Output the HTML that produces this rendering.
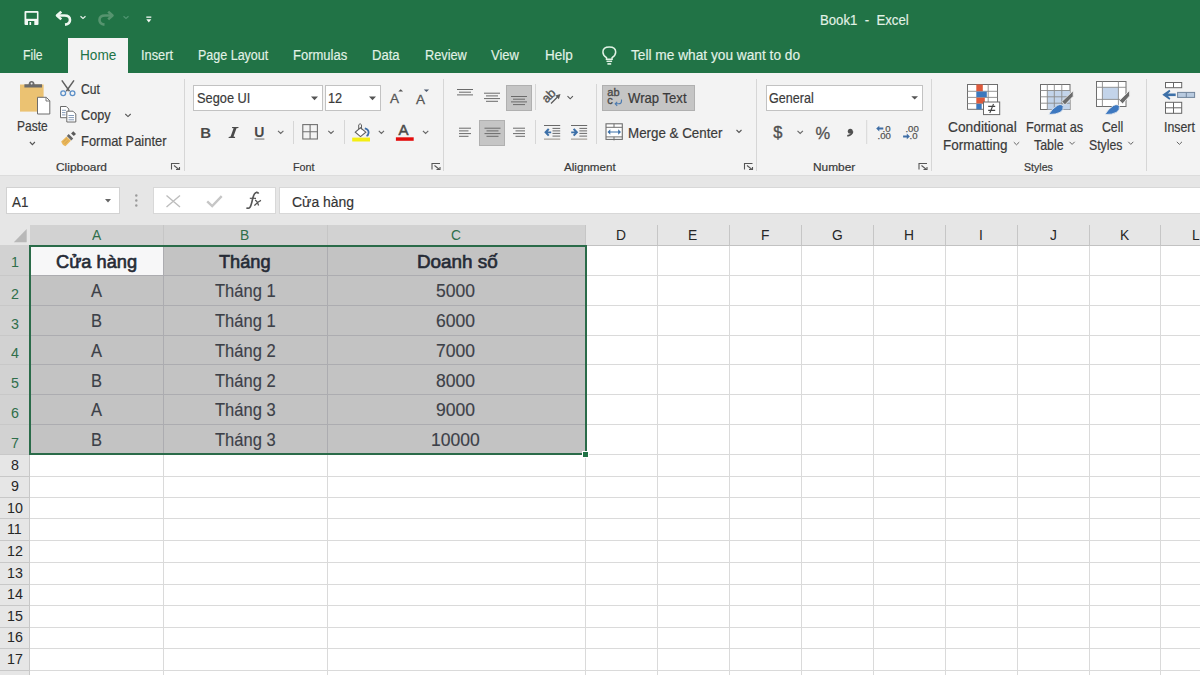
<!DOCTYPE html>
<html><head><meta charset="utf-8">
<style>
*{margin:0;padding:0;box-sizing:border-box}
html,body{width:1200px;height:675px;overflow:hidden;background:#fff;font-family:"Liberation Sans",sans-serif;position:relative}
.a{position:absolute;white-space:nowrap}
svg{position:absolute;overflow:visible}
#title{left:0;top:0;width:1200px;height:73px;background:#217346}
#hometab{left:68px;top:38px;width:60px;height:35px;background:#f3f3f3}
#ribbon{left:0;top:73px;width:1200px;height:102px;background:#f3f3f3}
#fbar{left:0;top:175px;width:1200px;height:50px;background:#e6e6e6;border-top:1px solid #dcdcdc}
.sep{position:absolute;width:1px;background:#d6d6d6}
.box{position:absolute;background:#fff;border:1px solid #c6c6c6}
.btnsel{position:absolute;background:#c5c5c5;border:1px solid #b0b0b0}
.t{position:absolute;white-space:nowrap;transform-origin:0 0;line-height:1}
</style></head><body>

<div id="title" class="a"></div>
<!-- QAT -->
<svg style="left:0;top:0" width="160" height="36">
 <rect x="24.5" y="11" width="14" height="14" rx="1" fill="#f3f8f4"/>
 <rect x="26.3" y="12.8" width="10.6" height="6" fill="#217346"/>
 <rect x="28" y="21" width="6.3" height="4" fill="#217346"/>
 <rect x="29.5" y="22" width="1.6" height="3" fill="#f3f8f4"/>
 <path d="M58 15.5 L64.5 15.5 Q70 15.5 70 20 Q70 24 65 24.6" fill="none" stroke="#eef7f0" stroke-width="2.6"/>
 <path d="M61.3 11.6 L57 15.5 L61.3 19.4" fill="none" stroke="#eef7f0" stroke-width="2.6" stroke-linejoin="round"/>
 <path d="M80.5 16.3 L83 18.5 L85.5 16.3" fill="none" stroke="#e6f0e9" stroke-width="1.2"/>
 <path d="M111.5 15.5 L105 15.5 Q99.5 15.5 99.5 20 Q99.5 24 104.5 24.6" fill="none" stroke="#56946f" stroke-width="2.6"/>
 <path d="M108.2 11.6 L112.5 15.5 L108.2 19.4" fill="none" stroke="#56946f" stroke-width="2.6" stroke-linejoin="round"/>
 <path d="M123.5 16.3 L126 18.5 L128.5 16.3" fill="none" stroke="#4f9470" stroke-width="1.2"/>
 <rect x="146.3" y="16.5" width="5" height="1.3" fill="#f3f8f4"/>
 <path d="M146.3 19.2 L151.3 19.2 L148.8 22.5 Z" fill="#f3f8f4"/>
</svg>
<div id="hometab" class="a"></div>
<svg style="left:0;top:0" width="640" height="70">
 <path d="M606.5 59.3 V57.6 C603.6 55.6 602.9 53.6 602.9 51.9 C602.9 48.6 605.7 46.9 609.3 46.9 C612.9 46.9 615.7 48.6 615.7 51.9 C615.7 53.6 615 55.6 612.1 57.6 V59.3 Z" fill="none" stroke="#e2f3e6" stroke-width="1.5"/>
 <path d="M606.5 61.3 H612.1" stroke="#e2f3e6" stroke-width="1.5"/>
 <path d="M607.4 63.9 H611.2" stroke="#e2f3e6" stroke-width="1.6"/>
</svg>

<div id="ribbon" class="a"></div>
<!-- separators -->
<div class="sep" style="left:184px;top:79px;height:92px"></div>
<div class="sep" style="left:443px;top:79px;height:92px"></div>
<div class="sep" style="left:756px;top:79px;height:92px"></div>
<div class="sep" style="left:931px;top:79px;height:92px"></div>
<div class="sep" style="left:1146px;top:79px;height:92px"></div>
<!-- group labels -->
<!-- launchers -->
<svg style="left:0;top:0" width="1200" height="180">
 <g fill="none" stroke="#555" stroke-width="1.1" transform="translate(0 0)">
  <path d="M171.5 169.5 L171.5 163.5 L179.5 163.5"/>
  <path d="M174 165.5 L179 169.5"/><path d="M176 169.5 L179.5 169.5 L179.5 167" />
 </g>
 <g fill="none" stroke="#555" stroke-width="1.1" transform="translate(260.5 0)">
  <path d="M171.5 169.5 L171.5 163.5 L179.5 163.5"/>
  <path d="M174 165.5 L179 169.5"/><path d="M176 169.5 L179.5 169.5 L179.5 167" />
 </g>
 <g fill="none" stroke="#555" stroke-width="1.1" transform="translate(573 0)">
  <path d="M171.5 169.5 L171.5 163.5 L179.5 163.5"/>
  <path d="M174 165.5 L179 169.5"/><path d="M176 169.5 L179.5 169.5 L179.5 167" />
 </g>
 <g fill="none" stroke="#555" stroke-width="1.1" transform="translate(747.5 0)">
  <path d="M171.5 169.5 L171.5 163.5 L179.5 163.5"/>
  <path d="M174 165.5 L179 169.5"/><path d="M176 169.5 L179.5 169.5 L179.5 167" />
 </g>
</svg>

<!-- Clipboard group -->
<svg style="left:0;top:0" width="184" height="175">
 <rect x="20" y="84.5" width="23.6" height="27.1" fill="#ebc272" />
 <path d="M24.4 87.6 L24.4 84.3 L28.6 84.3 Q29 81 31.6 81 Q34.2 81 34.6 84.3 L42 84.3 L42 87.6 Z" fill="#6b6b6b"/>
 <circle cx="31.6" cy="83.6" r="1" fill="#eee"/>
 <path d="M37.5 97.3 L46.3 97.3 L49.8 100.8 L49.8 114 L37.5 114 Z" fill="#fff" stroke="#6c6c6c" stroke-width="1"/>
 <path d="M46 97.5 L46 101 L49.6 101" fill="none" stroke="#6c6c6c" stroke-width="0.9"/>
 <!-- scissors -->
 <path d="M61.8 80.4 L69.5 91.3 M74 80.4 L66.3 91.3" fill="none" stroke="#5f5f5f" stroke-width="1.5"/>
 <g fill="none" stroke="#5b8fc7" stroke-width="1.3"><circle cx="63.2" cy="93.2" r="2.4"/><circle cx="72.5" cy="93.2" r="2.4"/></g>
 <!-- copy -->
 <path d="M60.5 106.5 L66.3 106.5 L68.8 109 L68.8 117.7 L60.5 117.7 Z" fill="#fff" stroke="#6a6a6a" stroke-width="1"/>
 <path d="M66.8 111.2 L73 111.2 L75.8 114 L75.8 122 L66.8 122 Z" fill="#fff" stroke="#6a6a6a" stroke-width="1"/>
 <path d="M62 110.3 h4 M62 112.6 h3.5 M62 114.9 h3.5 M68.5 115.5 h5.5 M68.5 117.6 h5.5 M68.5 119.8 h5.5" stroke="#7790b0" stroke-width="0.9"/>
 <!-- format painter -->
 <path d="M61.2 141.6 L66.5 136.4 L70.9 140.8 L65.4 146.3 Q62.5 145.5 61.2 141.6 Z" fill="#e9b65a"/>
 <path d="M63.2 142 L66.8 138.6 M64.8 143.8 L68.3 140.3" stroke="#c99a44" stroke-width="0.7"/>
 <path d="M66.8 136 L71.3 140.5 L73.2 138.6 L68.7 134.1 Z" fill="#666"/>
 <path d="M71.1 133.4 L73.8 136.1 L76 133.9 L73.3 131.2 Z" fill="#5a5a5a"/>
</svg>
<svg style="left:0;top:0" width="100" height="150"><path d="M29.9 142 L32.4 144.6 L34.9 142" fill="none" stroke="#555" stroke-width="1.1"/></svg>
<svg style="left:0;top:0" width="140" height="150"><path d="M125.3 114 L128 116.6 L130.7 114" fill="none" stroke="#555" stroke-width="1.1"/></svg>

<!-- Font group -->
<div class="box" style="left:193px;top:85px;width:130px;height:26px;border-color:#c2c2c2"></div>
<div class="box" style="left:325px;top:85px;width:56px;height:26px;border-color:#c2c2c2"></div>
<svg style="left:0;top:0" width="450" height="175">
 <path d="M311 96.5 L318 96.5 L314.5 100.3 Z M369 96.5 L376 96.5 L372.5 100.3 Z" fill="#555"/>
 <text x="390" y="102.8" font-family="Liberation Sans" font-size="13.5" fill="#555" stroke="#555" stroke-width="0.3">A</text>
 <path d="M398.3 91.6 L400.7 89.2 L403.1 91.6 Z" fill="#555"/>
 <text x="416" y="103.5" font-family="Liberation Sans" font-size="13.5" fill="#555" stroke="#555" stroke-width="0.3">A</text>
 <path d="M423.8 89.6 L426.4 92 L429.1 89.6 Z" fill="#4d5b70"/>
 <text x="200.3" y="138" font-family="Liberation Sans" font-weight="bold" font-size="15" fill="#4a4a4a">B</text>
 <path d="M232.2 126.9 L238.6 126.9 L238.3 128 L236.5 128.3 L233.5 136.6 L235.2 136.9 L234.9 138 L228.5 138 L228.8 136.9 L230.6 136.6 L233.6 128.3 L231.9 128 Z" fill="#4a4a4a"/>
 <text x="254.2" y="137" font-family="Liberation Sans" font-weight="bold" font-size="14" fill="#4a4a4a">U</text>
 <rect x="254.6" y="138.4" width="9.8" height="1.3" fill="#8a8a8a"/>
 <path d="M278 130.8 L280.7 133.5 L283.4 130.8 M328.3 130.8 L331 133.5 L333.7 130.8 M378.8 130.8 L381.4 133.5 L384 130.8 M422.9 130.8 L425.6 133.5 L428.3 130.8" fill="none" stroke="#666" stroke-width="1.1"/>
 <rect x="293" y="121" width="1" height="23" fill="#d6d6d6"/>
 <rect x="344" y="120" width="1" height="24" fill="#d6d6d6"/>
 <rect x="302.8" y="124.6" width="14.6" height="14.4" fill="none" stroke="#707070" stroke-width="1.1"/>
 <path d="M310.1 124.6 V139 M302.8 131.8 H317.4" stroke="#707070" stroke-width="1.1"/>
 <!-- fill color -->
 <path d="M355.3 132.2 L360.5 127.8 L365.8 132.2 L360.5 136.6 Z" fill="#fff" stroke="#606060" stroke-width="1.1"/>
 <path d="M358.7 129.3 L358.7 124.8 Q360.1 122.6 361.5 124.8 L361.5 129.3" fill="none" stroke="#606060" stroke-width="1"/>
 <path d="M364.8 128.4 Q368.8 129.5 368.6 132.8 Q368.3 135.3 366.5 136" fill="none" stroke="#3f6fa8" stroke-width="1.8"/>
 <rect x="352.2" y="137.6" width="17.8" height="3.9" fill="#f4ee12"/>
 <text x="398.6" y="135.4" font-family="Liberation Sans" font-size="15" fill="#4a4a4a" stroke="#4a4a4a" stroke-width="0.5">A</text>
 <rect x="395.9" y="137.3" width="17.8" height="3.5" fill="#e30d0d"/>
</svg>

<!-- Alignment group -->
<div class="btnsel" style="left:506px;top:84.5px;width:26px;height:26px"></div>
<div class="btnsel" style="left:479px;top:119.5px;width:26px;height:26px"></div>
<div class="btnsel" style="left:602px;top:84.5px;width:93px;height:26px"></div>
<svg style="left:0;top:0" width="760" height="175" >
 <g stroke="#6a6a6a" stroke-width="1" fill="none">
  <path d="M457 89.5 h16 M459 92.2 h12 M457 94.9 h16"/>
  <path d="M484 93.2 h16 M486 95.9 h12 M484 98.6 h16 M486 101.3 h12"/>
  <path d="M511 96.5 h16 M513 99.2 h12 M511 101.9 h16 M513 104.6 h12"/>
  <path d="M459 128.2 h12 M459 130.9 h9.5 M459 133.6 h12 M459 136.3 h9.5"/>
  <path d="M484.5 128.2 h16 M486.5 130.9 h12 M484.5 133.6 h16 M486.5 136.3 h12"/>
  <path d="M513 128.2 h12 M515.5 130.9 h9.5 M513 133.6 h12 M515.5 136.3 h9.5"/>
  <path d="M544 125.5 h16.2 M552.5 128.4 h7.7 M552.5 130.9 h7.7 M552.5 133.4 h7.7 M552.5 136.1 h7.7" />
  <path d="M571 125.5 h16.2 M579.4 128.4 h7.7 M579.4 130.9 h7.7 M579.4 133.4 h7.7 M579.4 136.1 h7.7" />
  <path d="M544 139.2 h16.2 M571 139.2 h16.2" stroke="#a8a39c" stroke-width="1.2"/>
 </g>
 <rect x="535" y="84" width="1" height="26" fill="#d6d6d6"/>
 <rect x="535" y="120" width="1" height="24" fill="#d6d6d6"/>
 <rect x="596" y="84" width="1" height="60" fill="#d6d6d6"/>
 <path d="M544.2 132.3 L548 128.3 L549.5 129.5 L547.8 131.4 L551.2 131.4 L551.2 133.2 L547.8 133.2 L549.5 135.1 L548 136.3 Z" fill="#3d70a8"/>
 <path d="M578.2 132.3 L574.4 128.3 L572.9 129.5 L574.6 131.4 L571.2 131.4 L571.2 133.2 L574.6 133.2 L572.9 135.1 L574.4 136.3 Z" fill="#3d70a8"/>
 <!-- orientation -->
 <text x="541.8" y="99.2" font-family="Liberation Sans" font-size="12.5" fill="#555" stroke="#555" stroke-width="0.35" transform="rotate(-45 549.5 95.5)">ab</text>
 <path d="M551 103.5 L557.5 97" fill="none" stroke="#5a5a5a" stroke-width="1.3"/>
 <path d="M560.5 94 L555.3 95.6 L558.9 99.2 Z" fill="#5a5a5a"/>
 <path d="M567.5 96.2 L570.2 98.8 L572.9 96.2" fill="none" stroke="#555" stroke-width="1.1"/>
 <!-- wrap text -->
 <text x="607.3" y="96.3" font-family="Liberation Sans" font-size="11" fill="#4a4a4a" stroke="#4a4a4a" stroke-width="0.35">ab</text>
 <text x="607.3" y="104.2" font-family="Liberation Sans" font-size="11" fill="#4a4a4a" stroke="#4a4a4a" stroke-width="0.35">c</text>
 <path d="M621.5 99.5 v1.5 q0 2.8 -2.8 2.8 h-3 M617.2 101.8 l-2 2 l2 2" fill="none" stroke="#4a7ab0" stroke-width="1.1"/>
 <!-- merge icon -->
 <rect x="606" y="123.8" width="16.3" height="15.6" fill="#fff" stroke="#6e6e6e" stroke-width="1.1"/>
 <path d="M606 127.3 h16.3 M606 136.9 h16.3 M614 123.8 v3.5 M614 136.9 v3.5" stroke="#6e6e6e" stroke-width="1"/>
 <path d="M609 132 h10.5" stroke="#3d70a8" stroke-width="1"/>
 <path d="M607.5 132 L610.3 129.2 L610.3 134.8 Z M621 132 L618.2 129.2 L618.2 134.8 Z" fill="#3d70a8"/>
 <path d="M736.5 130 L739 132.5 L741.5 130" fill="none" stroke="#555" stroke-width="1.1"/>
</svg>

<!-- Number group -->
<div class="box" style="left:766px;top:85px;width:157px;height:26px;border-color:#c2c2c2"></div>
<svg style="left:0;top:0" width="940" height="175">
 <path d="M911.3 96.3 L918 96.3 L914.65 99.6 Z" fill="#555"/>
 <text x="773.2" y="138" font-family="Liberation Sans" font-size="16.5" fill="#505050" stroke="#505050" stroke-width="0.35">$</text>
 <path d="M797.5 130.8 L800.2 133.5 L802.9 130.8" fill="none" stroke="#666" stroke-width="1.1"/>
 <text x="815.6" y="138.6" font-family="Liberation Sans" font-size="16.5" fill="#505050" stroke="#505050" stroke-width="0.3">%</text>
 <circle cx="850.3" cy="131.2" r="2.5" fill="#505050"/>
 <path d="M852.5 131.5 Q852.3 134.8 847.3 135.8" fill="none" stroke="#505050" stroke-width="1.8"/>
 <rect x="866.2" y="120" width="1" height="24" fill="#d6d6d6"/>
 <g font-family="Liberation Sans" font-size="9.6" fill="#555" stroke="#555" stroke-width="0.25">
 <text x="882.6" y="131.6">.0</text>
 <text x="877.6" y="139.4">.00</text>
 <text x="905.4" y="131.6">.00</text>
 <text x="909.6" y="139.4">.0</text>
 </g>
 <path d="M876.2 128.6 L879.3 125.8 L879.3 127.6 L883.3 127.6 L883.3 129.6 L879.3 129.6 L879.3 131.4 Z" fill="#3f6ea6"/>
 <path d="M909.9 136.4 L906.8 133.6 L906.8 135.4 L903.1 135.4 L903.1 137.4 L906.8 137.4 L906.8 139.2 Z" fill="#3f6ea6"/>
</svg>

<!-- Styles group -->
<svg style="left:0;top:0" width="1200" height="175">
 <!-- conditional formatting -->
 <rect x="967.5" y="84.5" width="30" height="24.8" fill="#fff" stroke="#6e6e6e" stroke-width="1"/>
 <path d="M967.5 91.3 h30 M967.5 97.4 h30 M967.5 103.6 h30 M988.2 84.5 v24.8" stroke="#8a8a8a" stroke-width="0.9"/>
 <rect x="976.3" y="84.5" width="6.5" height="6.8" fill="#de5a3c"/>
 <rect x="976.3" y="91.6" width="10.5" height="5.6" fill="#3c78bd"/>
 <rect x="976.3" y="97.7" width="8.5" height="5.7" fill="#de5a3c"/>
 <rect x="976.3" y="103.9" width="5.4" height="5.4" fill="#3c78bd"/>
 <rect x="983.5" y="102" width="16.2" height="12.6" fill="#fff" stroke="#6a6a6a" stroke-width="1"/>
 <path d="M988.2 106.4 h7 M988.2 110.4 h7 M993.5 104 L989.8 113" stroke="#444" stroke-width="1.1"/>
 <!-- format as table -->
 <rect x="1040.5" y="84.5" width="29.5" height="25" fill="#fff" stroke="#6e6e6e" stroke-width="1"/>
 <rect x="1047.3" y="90.5" width="22.5" height="19" fill="#c3d4ea"/>
 <path d="M1040.5 90.5 h29.5 M1040.5 96.8 h29.5 M1040.5 103.2 h29.5 M1047.3 84.5 v25 M1054.3 84.5 v25 M1061.8 84.5 v25" stroke="#8a8a8a" stroke-width="0.9"/>
 <path d="M1073.2 90.8 L1073.2 96.2 L1065 104.8 L1061.8 101.6 Z" fill="#6b6b6b" stroke="#f3f3f3" stroke-width="0.8"/>
 <path d="M1048.7 114.5 Q1052 108.5 1057.5 105.3 Q1061.5 103.5 1063.2 106.2 Q1064 109.8 1060.2 112.3 Q1056 114.6 1048.7 114.5 Z" fill="#3d78c0" stroke="#f3f3f3" stroke-width="0.8"/>
 <!-- cell styles -->
 <rect x="1096.5" y="81.5" width="29.5" height="25" fill="#fff" stroke="#6e6e6e" stroke-width="1"/>
 <rect x="1102.4" y="87.3" width="16" height="12.1" fill="#c3d4ea"/>
 <path d="M1096.5 87.3 h29.5 M1096.5 99.4 h29.5 M1102.4 81.5 v25 M1118.4 81.5 v25" stroke="#8a8a8a" stroke-width="0.9"/>
 <path d="M1129.6 90.5 L1129.6 95.9 L1122.6 103.8 L1119.4 100.6 Z" fill="#6b6b6b" stroke="#f3f3f3" stroke-width="0.8"/>
 <path d="M1104.9 114.6 Q1108.2 108.6 1113.7 105.4 Q1117.7 103.6 1119.4 106.3 Q1120.2 109.9 1116.4 112.4 Q1112.2 114.7 1104.9 114.6 Z" fill="#3d78c0" stroke="#f3f3f3" stroke-width="0.8"/>
 <!-- insert -->
 <rect x="1165.5" y="82.5" width="16.2" height="5.2" fill="#fff" stroke="#666" stroke-width="1"/>
 <path d="M1173.5 82.5 v5.2" stroke="#666"/>
 <rect x="1177.6" y="92.4" width="17" height="5" fill="#b9cbe0" stroke="#71849c" stroke-width="1"/>
 <path d="M1186.3 92.4 v5" stroke="#71849c"/>
 <rect x="1165.5" y="102.3" width="16.2" height="11" fill="#fff" stroke="#666" stroke-width="1"/>
 <path d="M1165.5 107.8 h16.2 M1173.5 102.3 v11" stroke="#666"/>
 <path d="M1165 94.8 h10.7" stroke="#3d70a8" stroke-width="2.6"/>
 <path d="M1162.3 94.8 L1169.4 89.8 L1170.4 91.2 L1166.8 94.8 L1170.4 98.4 L1169.4 99.8 Z" fill="#3d70a8"/>
 <path d="M1013.8 142.2 L1016.5 144.8 L1019.2 142.2 M1069.5 141.8 L1072.1 144.4 L1074.7 141.8 M1128.3 141.8 L1130.8 144.4 L1133.3 141.8 M1176.8 141.8 L1179.4 144.4 L1182 141.8" fill="none" stroke="#666" stroke-width="1"/>
</svg>

<div id="fbar" class="a"></div>
<div class="box" style="left:5.5px;top:187px;width:114px;height:27px;border-color:#d2d2d2"></div>
<svg style="left:0;top:0" width="300" height="220">
 <path d="M105 199 L111 199 L108 202.5 Z" fill="#666"/>
 <circle cx="136.3" cy="195.5" r="1.2" fill="#9a9a9a"/><circle cx="136.3" cy="200.5" r="1.2" fill="#9a9a9a"/><circle cx="136.3" cy="205.5" r="1.2" fill="#9a9a9a"/>
</svg>
<div class="box" style="left:153px;top:187px;width:123px;height:27px;border-color:#d8d8d8"></div>
<svg style="left:0;top:0" width="300" height="220">
 <path d="M166.5 195.5 L180 207 M180 195.5 L166.5 207" stroke="#bdbdbd" stroke-width="1.4"/>
 <path d="M207.2 201.3 L212.2 206 L221.7 196.2" fill="none" stroke="#c6c6c6" stroke-width="2.4"/>
 <path d="M246.5 207.6 Q248.3 209.2 250 207.2 Q251.3 205.3 252.7 198.5 Q254 193 256.3 192.4 Q258 192.1 258.6 193.6" stroke="#555" stroke-width="1.6" fill="none"/>
 <path d="M249.8 198.3 H256" stroke="#555" stroke-width="1.2"/>
 <path d="M255 200.2 Q256.8 200.5 258.6 205.5 M261 200.3 Q258 201.5 254.4 205.6" stroke="#555" stroke-width="1.3" fill="none"/>
</svg>
<div class="box" style="left:279px;top:187px;width:930px;height:27px;border-color:#d8d8d8"></div>

<div class="a" style="left:30px;top:245px;width:555px;height:209px;background:#c3c3c3"></div>
<div class="a" style="left:30px;top:245px;width:133px;height:30px;background:#f7f7f8"></div>
<div class="a" style="left:163px;top:245px;width:1px;height:209px;background:#acacb0"></div>
<div class="a" style="left:163px;top:454px;width:1px;height:221px;background:#dadada"></div>
<div class="a" style="left:327px;top:245px;width:1px;height:209px;background:#acacb0"></div>
<div class="a" style="left:327px;top:454px;width:1px;height:221px;background:#dadada"></div>
<div class="a" style="left:585px;top:245px;width:1px;height:430px;background:#dadada"></div>
<div class="a" style="left:657px;top:245px;width:1px;height:430px;background:#dadada"></div>
<div class="a" style="left:729px;top:245px;width:1px;height:430px;background:#dadada"></div>
<div class="a" style="left:801px;top:245px;width:1px;height:430px;background:#dadada"></div>
<div class="a" style="left:873px;top:245px;width:1px;height:430px;background:#dadada"></div>
<div class="a" style="left:945px;top:245px;width:1px;height:430px;background:#dadada"></div>
<div class="a" style="left:1017px;top:245px;width:1px;height:430px;background:#dadada"></div>
<div class="a" style="left:1089px;top:245px;width:1px;height:430px;background:#dadada"></div>
<div class="a" style="left:1160px;top:245px;width:1px;height:430px;background:#dadada"></div>
<div class="a" style="left:30px;top:275px;width:555px;height:1px;background:#acacb0"></div>
<div class="a" style="left:585px;top:275px;width:615px;height:1px;background:#dadada"></div>
<div class="a" style="left:30px;top:305px;width:555px;height:1px;background:#acacb0"></div>
<div class="a" style="left:585px;top:305px;width:615px;height:1px;background:#dadada"></div>
<div class="a" style="left:30px;top:335px;width:555px;height:1px;background:#acacb0"></div>
<div class="a" style="left:585px;top:335px;width:615px;height:1px;background:#dadada"></div>
<div class="a" style="left:30px;top:364px;width:555px;height:1px;background:#acacb0"></div>
<div class="a" style="left:585px;top:364px;width:615px;height:1px;background:#dadada"></div>
<div class="a" style="left:30px;top:394px;width:555px;height:1px;background:#acacb0"></div>
<div class="a" style="left:585px;top:394px;width:615px;height:1px;background:#dadada"></div>
<div class="a" style="left:30px;top:424px;width:555px;height:1px;background:#acacb0"></div>
<div class="a" style="left:585px;top:424px;width:615px;height:1px;background:#dadada"></div>
<div class="a" style="left:30px;top:454px;width:1170px;height:1px;background:#dadada"></div>
<div class="a" style="left:30px;top:476px;width:1170px;height:1px;background:#dadada"></div>
<div class="a" style="left:30px;top:497px;width:1170px;height:1px;background:#dadada"></div>
<div class="a" style="left:30px;top:518px;width:1170px;height:1px;background:#dadada"></div>
<div class="a" style="left:30px;top:540px;width:1170px;height:1px;background:#dadada"></div>
<div class="a" style="left:30px;top:562px;width:1170px;height:1px;background:#dadada"></div>
<div class="a" style="left:30px;top:584px;width:1170px;height:1px;background:#dadada"></div>
<div class="a" style="left:30px;top:605px;width:1170px;height:1px;background:#dadada"></div>
<div class="a" style="left:30px;top:627px;width:1170px;height:1px;background:#dadada"></div>
<div class="a" style="left:30px;top:648px;width:1170px;height:1px;background:#dadada"></div>
<div class="a" style="left:30px;top:670px;width:1170px;height:1px;background:#dadada"></div>
<div class="a" style="left:30px;top:692px;width:1170px;height:1px;background:#dadada"></div>
<div class="a" style="left:0;top:225px;width:1200px;height:20px;background:#e6e6e6"></div>
<div class="a" style="left:30px;top:225px;width:555px;height:20px;background:#d2d2d2"></div>
<div class="a" style="left:30px;top:245px;width:1170px;height:1px;background:#c2c2c2"></div>
<div class="a" style="left:163px;top:225px;width:1px;height:20px;background:#c6c6c6"></div>
<div class="a" style="left:327px;top:225px;width:1px;height:20px;background:#c6c6c6"></div>
<div class="a" style="left:585px;top:225px;width:1px;height:20px;background:#c6c6c6"></div>
<div class="a" style="left:657px;top:225px;width:1px;height:20px;background:#c6c6c6"></div>
<div class="a" style="left:729px;top:225px;width:1px;height:20px;background:#c6c6c6"></div>
<div class="a" style="left:801px;top:225px;width:1px;height:20px;background:#c6c6c6"></div>
<div class="a" style="left:873px;top:225px;width:1px;height:20px;background:#c6c6c6"></div>
<div class="a" style="left:945px;top:225px;width:1px;height:20px;background:#c6c6c6"></div>
<div class="a" style="left:1017px;top:225px;width:1px;height:20px;background:#c6c6c6"></div>
<div class="a" style="left:1089px;top:225px;width:1px;height:20px;background:#c6c6c6"></div>
<div class="a" style="left:1160px;top:225px;width:1px;height:20px;background:#c6c6c6"></div>
<div class="a" style="left:0;top:245px;width:30px;height:430px;background:#e6e6e6"></div>
<div class="a" style="left:0;top:245px;width:30px;height:209px;background:#d2d2d2"></div>
<div class="a" style="left:29px;top:245px;width:1px;height:430px;background:#c8c8c8"></div>
<div class="a" style="left:0;top:275px;width:30px;height:1px;background:#c8c8c8"></div>
<div class="a" style="left:0;top:305px;width:30px;height:1px;background:#c8c8c8"></div>
<div class="a" style="left:0;top:335px;width:30px;height:1px;background:#c8c8c8"></div>
<div class="a" style="left:0;top:364px;width:30px;height:1px;background:#c8c8c8"></div>
<div class="a" style="left:0;top:394px;width:30px;height:1px;background:#c8c8c8"></div>
<div class="a" style="left:0;top:424px;width:30px;height:1px;background:#c8c8c8"></div>
<div class="a" style="left:0;top:454px;width:30px;height:1px;background:#c8c8c8"></div>
<div class="a" style="left:0;top:476px;width:30px;height:1px;background:#c8c8c8"></div>
<div class="a" style="left:0;top:497px;width:30px;height:1px;background:#c8c8c8"></div>
<div class="a" style="left:0;top:518px;width:30px;height:1px;background:#c8c8c8"></div>
<div class="a" style="left:0;top:540px;width:30px;height:1px;background:#c8c8c8"></div>
<div class="a" style="left:0;top:562px;width:30px;height:1px;background:#c8c8c8"></div>
<div class="a" style="left:0;top:584px;width:30px;height:1px;background:#c8c8c8"></div>
<div class="a" style="left:0;top:605px;width:30px;height:1px;background:#c8c8c8"></div>
<div class="a" style="left:0;top:627px;width:30px;height:1px;background:#c8c8c8"></div>
<div class="a" style="left:0;top:648px;width:30px;height:1px;background:#c8c8c8"></div>
<div class="a" style="left:0;top:670px;width:30px;height:1px;background:#c8c8c8"></div>
<div class="a" style="left:0;top:692px;width:30px;height:1px;background:#c8c8c8"></div>
<svg style="left:0;top:225px" width="30" height="20"><path d="M13.8 17.2 L26.7 4 L26.7 17.2 Z" fill="#b8b8b8"/></svg>
<div class="a" style="left:29px;top:245px;width:558px;height:210px;border:2px solid #2a6b49"></div>
<div class="a" style="left:582px;top:451px;width:7px;height:7px;background:#217346;border:1px solid #fff"></div>


<div class="t" style="left:22.70px;top:48.30px;font-size:14px;color:#e2f2e6;-webkit-text-stroke:0.15px #e2f2e6;transform:scaleX(0.8696)">File</div>
<div class="t" style="left:79.50px;top:48.30px;font-size:14px;color:#217346;transform:scaleX(0.9730)">Home</div>
<div class="t" style="left:140.60px;top:48.30px;font-size:14px;color:#e2f2e6;-webkit-text-stroke:0.15px #e2f2e6;transform:scaleX(0.9143)">Insert</div>
<div class="t" style="left:198.00px;top:48.30px;font-size:14px;color:#e2f2e6;-webkit-text-stroke:0.15px #e2f2e6;transform:scaleX(0.8937)">Page Layout</div>
<div class="t" style="left:293.30px;top:48.30px;font-size:14px;color:#e2f2e6;-webkit-text-stroke:0.15px #e2f2e6;transform:scaleX(0.9293)">Formulas</div>
<div class="t" style="left:372.00px;top:48.30px;font-size:14px;color:#e2f2e6;-webkit-text-stroke:0.15px #e2f2e6;transform:scaleX(0.9333)">Data</div>
<div class="t" style="left:424.80px;top:48.30px;font-size:14px;color:#e2f2e6;-webkit-text-stroke:0.15px #e2f2e6;transform:scaleX(0.9109)">Review</div>
<div class="t" style="left:491.20px;top:48.30px;font-size:14px;color:#e2f2e6;-webkit-text-stroke:0.15px #e2f2e6;transform:scaleX(0.9290)">View</div>
<div class="t" style="left:544.50px;top:48.30px;font-size:14px;color:#e2f2e6;-webkit-text-stroke:0.15px #e2f2e6;transform:scaleX(0.9655)">Help</div>
<div class="t" style="left:630.70px;top:48.30px;font-size:14px;color:#e2f2e6;-webkit-text-stroke:0.15px #e2f2e6;transform:scaleX(0.9786)">Tell me what you want to do</div>
<div class="t" style="left:819.50px;top:12.70px;font-size:14px;color:#e2f2e6;-webkit-text-stroke:0.15px #e2f2e6;transform:scaleX(0.9415)">Book1&nbsp; - &nbsp;Excel</div>
<div class="t" style="left:17.40px;top:119.30px;font-size:14.3px;color:#3a3a3a;-webkit-text-stroke:0.2px #3a3a3a;transform:scaleX(0.8389)">Paste</div>
<div class="t" style="left:81.30px;top:82.00px;font-size:14.3px;color:#3a3a3a;-webkit-text-stroke:0.2px #3a3a3a;transform:scaleX(0.8478)">Cut</div>
<div class="t" style="left:81.30px;top:107.90px;font-size:14.3px;color:#3a3a3a;-webkit-text-stroke:0.2px #3a3a3a;transform:scaleX(0.8882)">Copy</div>
<div class="t" style="left:81.30px;top:133.50px;font-size:14.3px;color:#3a3a3a;-webkit-text-stroke:0.2px #3a3a3a;transform:scaleX(0.9042)">Format Painter</div>
<div class="t" style="left:56.10px;top:161.90px;font-size:11.2px;color:#3a3a3a;-webkit-text-stroke:0.2px #3a3a3a;transform:scaleX(1.0646)">Clipboard</div>
<div class="t" style="left:196.50px;top:91.30px;font-size:14.3px;color:#3a3a3a;-webkit-text-stroke:0.2px #3a3a3a;transform:scaleX(0.8949)">Segoe UI</div>
<div class="t" style="left:327.61px;top:91.30px;font-size:14.3px;color:#3a3a3a;-webkit-text-stroke:0.2px #3a3a3a;transform:scaleX(0.8933)">12</div>
<div class="t" style="left:292.50px;top:161.90px;font-size:11.2px;color:#3a3a3a;-webkit-text-stroke:0.2px #3a3a3a;transform:scaleX(0.9652)">Font</div>
<div class="t" style="left:628.00px;top:91.00px;font-size:14.3px;color:#3a3a3a;-webkit-text-stroke:0.2px #3a3a3a;transform:scaleX(0.9172)">Wrap Text</div>
<div class="t" style="left:627.50px;top:126.00px;font-size:14.3px;color:#3a3a3a;-webkit-text-stroke:0.2px #3a3a3a;transform:scaleX(0.9347)">Merge &amp; Center</div>
<div class="t" style="left:564.00px;top:161.90px;font-size:11.2px;color:#3a3a3a;-webkit-text-stroke:0.2px #3a3a3a;transform:scaleX(1.0400)">Alignment</div>
<div class="t" style="left:769.30px;top:90.80px;font-size:14.3px;color:#3a3a3a;-webkit-text-stroke:0.2px #3a3a3a;transform:scaleX(0.8784)">General</div>
<div class="t" style="left:813.30px;top:161.90px;font-size:11.2px;color:#3a3a3a;-webkit-text-stroke:0.2px #3a3a3a;transform:scaleX(1.0625)">Number</div>
<div class="t" style="left:947.50px;top:119.70px;font-size:14.3px;color:#3a3a3a;-webkit-text-stroke:0.2px #3a3a3a;transform:scaleX(0.9620)">Conditional</div>
<div class="t" style="left:943.30px;top:137.60px;font-size:14.3px;color:#3a3a3a;-webkit-text-stroke:0.2px #3a3a3a;transform:scaleX(0.9441)">Formatting</div>
<div class="t" style="left:1026.00px;top:120.20px;font-size:14.3px;color:#3a3a3a;-webkit-text-stroke:0.2px #3a3a3a;transform:scaleX(0.8877)">Format as</div>
<div class="t" style="left:1034.25px;top:137.50px;font-size:14.3px;color:#3a3a3a;-webkit-text-stroke:0.2px #3a3a3a;transform:scaleX(0.8691)">Table</div>
<div class="t" style="left:1101.75px;top:120.00px;font-size:14.3px;color:#3a3a3a;-webkit-text-stroke:0.2px #3a3a3a;transform:scaleX(0.8580)">Cell</div>
<div class="t" style="left:1089.00px;top:137.50px;font-size:14.3px;color:#3a3a3a;-webkit-text-stroke:0.2px #3a3a3a;transform:scaleX(0.8564)">Styles</div>
<div class="t" style="left:1163.70px;top:120.00px;font-size:14.3px;color:#3a3a3a;-webkit-text-stroke:0.2px #3a3a3a;transform:scaleX(0.8625)">Insert</div>
<div class="t" style="left:1024.00px;top:161.90px;font-size:11.2px;color:#3a3a3a;-webkit-text-stroke:0.2px #3a3a3a;transform:scaleX(0.9452)">Styles</div>
<div class="t" style="left:12.00px;top:194.50px;font-size:14.2px;color:#333;-webkit-text-stroke:0.15px #333;transform:scaleX(0.9412)">A1</div>
<div class="t" style="left:292.20px;top:194.60px;font-size:14px;color:#333;-webkit-text-stroke:0.15px #333;transform:scaleX(0.9968)">Cửa hàng</div>
<div class="t" style="left:56.25px;top:253.90px;font-size:17.5px;color:#262b36;-webkit-text-stroke:0.6px #262b36;transform:scaleX(1.0417)">Cửa hàng</div>
<div class="t" style="left:219.10px;top:253.90px;font-size:17.5px;color:#262b36;-webkit-text-stroke:0.6px #262b36;transform:scaleX(1.0400)">Tháng</div>
<div class="t" style="left:416.60px;top:253.90px;font-size:17.5px;color:#262b36;-webkit-text-stroke:0.6px #262b36;transform:scaleX(1.0773)">Doanh số</div>
<div class="t" style="left:90.84px;top:283.10px;font-size:17.5px;color:#3c4048;-webkit-text-stroke:0.15px #3c4048;transform:scaleX(0.9438)">A</div>
<div class="t" style="left:214.80px;top:283.10px;font-size:17.5px;color:#3c4048;-webkit-text-stroke:0.15px #3c4048;transform:scaleX(0.9438)">Tháng 1</div>
<div class="t" style="left:436.46px;top:283.10px;font-size:17.5px;color:#3c4048;-webkit-text-stroke:0.15px #3c4048;transform:scaleX(1.0021)">5000</div>
<div class="t" style="left:90.84px;top:313.10px;font-size:17.5px;color:#3c4048;-webkit-text-stroke:0.15px #3c4048;transform:scaleX(0.9438)">B</div>
<div class="t" style="left:214.80px;top:313.10px;font-size:17.5px;color:#3c4048;-webkit-text-stroke:0.15px #3c4048;transform:scaleX(0.9438)">Tháng 1</div>
<div class="t" style="left:436.46px;top:313.10px;font-size:17.5px;color:#3c4048;-webkit-text-stroke:0.15px #3c4048;transform:scaleX(1.0021)">6000</div>
<div class="t" style="left:90.84px;top:343.10px;font-size:17.5px;color:#3c4048;-webkit-text-stroke:0.15px #3c4048;transform:scaleX(0.9438)">A</div>
<div class="t" style="left:214.80px;top:343.10px;font-size:17.5px;color:#3c4048;-webkit-text-stroke:0.15px #3c4048;transform:scaleX(0.9438)">Tháng 2</div>
<div class="t" style="left:436.46px;top:343.10px;font-size:17.5px;color:#3c4048;-webkit-text-stroke:0.15px #3c4048;transform:scaleX(1.0021)">7000</div>
<div class="t" style="left:90.84px;top:372.60px;font-size:17.5px;color:#3c4048;-webkit-text-stroke:0.15px #3c4048;transform:scaleX(0.9438)">B</div>
<div class="t" style="left:214.80px;top:372.60px;font-size:17.5px;color:#3c4048;-webkit-text-stroke:0.15px #3c4048;transform:scaleX(0.9438)">Tháng 2</div>
<div class="t" style="left:436.46px;top:372.60px;font-size:17.5px;color:#3c4048;-webkit-text-stroke:0.15px #3c4048;transform:scaleX(1.0021)">8000</div>
<div class="t" style="left:90.84px;top:402.40px;font-size:17.5px;color:#3c4048;-webkit-text-stroke:0.15px #3c4048;transform:scaleX(0.9438)">A</div>
<div class="t" style="left:214.80px;top:402.40px;font-size:17.5px;color:#3c4048;-webkit-text-stroke:0.15px #3c4048;transform:scaleX(0.9438)">Tháng 3</div>
<div class="t" style="left:436.46px;top:402.40px;font-size:17.5px;color:#3c4048;-webkit-text-stroke:0.15px #3c4048;transform:scaleX(1.0021)">9000</div>
<div class="t" style="left:90.84px;top:432.20px;font-size:17.5px;color:#3c4048;-webkit-text-stroke:0.15px #3c4048;transform:scaleX(0.9438)">B</div>
<div class="t" style="left:214.80px;top:432.20px;font-size:17.5px;color:#3c4048;-webkit-text-stroke:0.15px #3c4048;transform:scaleX(0.9438)">Tháng 3</div>
<div class="t" style="left:430.95px;top:432.20px;font-size:17.5px;color:#3c4048;-webkit-text-stroke:0.15px #3c4048;transform:scaleX(1.0021)">10000</div>
<div class="t" style="left:91.90px;top:227.20px;font-size:15px;color:#2f6e4a;transform:scaleX(0.9200)">A</div>
<div class="t" style="left:240.40px;top:227.20px;font-size:15px;color:#2f6e4a;transform:scaleX(0.9200)">B</div>
<div class="t" style="left:450.94px;top:227.20px;font-size:15px;color:#2f6e4a;transform:scaleX(0.9200)">C</div>
<div class="t" style="left:615.94px;top:227.20px;font-size:15px;color:#262626;transform:scaleX(0.9200)">D</div>
<div class="t" style="left:688.40px;top:227.20px;font-size:15px;color:#262626;transform:scaleX(0.9200)">E</div>
<div class="t" style="left:760.86px;top:227.20px;font-size:15px;color:#262626;transform:scaleX(0.9200)">F</div>
<div class="t" style="left:831.94px;top:227.20px;font-size:15px;color:#262626;transform:scaleX(0.9200)">G</div>
<div class="t" style="left:903.94px;top:227.20px;font-size:15px;color:#262626;transform:scaleX(0.9200)">H</div>
<div class="t" style="left:978.70px;top:227.20px;font-size:15px;color:#262626;transform:scaleX(0.9200)">I</div>
<div class="t" style="left:1049.78px;top:227.20px;font-size:15px;color:#262626;transform:scaleX(0.9200)">J</div>
<div class="t" style="left:1119.90px;top:227.20px;font-size:15px;color:#262626;transform:scaleX(0.9200)">K</div>
<div class="t" style="left:1192.32px;top:227.20px;font-size:15px;color:#262626;transform:scaleX(0.9200)">L</div>
<div class="t" style="left:10.66px;top:253.60px;font-size:15.5px;color:#2f6e4a;transform:scaleX(0.9200)">1</div>
<div class="t" style="left:11.12px;top:285.70px;font-size:15.5px;color:#2f6e4a;transform:scaleX(0.9200)">2</div>
<div class="t" style="left:10.66px;top:315.70px;font-size:15.5px;color:#2f6e4a;transform:scaleX(0.9200)">3</div>
<div class="t" style="left:10.66px;top:345.20px;font-size:15.5px;color:#2f6e4a;transform:scaleX(0.9200)">4</div>
<div class="t" style="left:10.66px;top:375.00px;font-size:15.5px;color:#2f6e4a;transform:scaleX(0.9200)">5</div>
<div class="t" style="left:10.66px;top:404.80px;font-size:15.5px;color:#2f6e4a;transform:scaleX(0.9200)">6</div>
<div class="t" style="left:10.66px;top:434.70px;font-size:15.5px;color:#2f6e4a;transform:scaleX(0.9200)">7</div>
<div class="t" style="left:10.66px;top:456.60px;font-size:15.5px;color:#262626;transform:scaleX(0.9200)">8</div>
<div class="t" style="left:10.66px;top:478.20px;font-size:15.5px;color:#262626;transform:scaleX(0.9200)">9</div>
<div class="t" style="left:6.52px;top:499.80px;font-size:15.5px;color:#262626;transform:scaleX(0.9200)">10</div>
<div class="t" style="left:6.98px;top:521.40px;font-size:15.5px;color:#262626;transform:scaleX(0.9200)">11</div>
<div class="t" style="left:6.52px;top:543.00px;font-size:15.5px;color:#262626;transform:scaleX(0.9200)">12</div>
<div class="t" style="left:6.52px;top:564.60px;font-size:15.5px;color:#262626;transform:scaleX(0.9200)">13</div>
<div class="t" style="left:6.52px;top:586.20px;font-size:15.5px;color:#262626;transform:scaleX(0.9200)">14</div>
<div class="t" style="left:6.52px;top:607.80px;font-size:15.5px;color:#262626;transform:scaleX(0.9200)">15</div>
<div class="t" style="left:6.52px;top:629.40px;font-size:15.5px;color:#262626;transform:scaleX(0.9200)">16</div>
<div class="t" style="left:6.52px;top:651.00px;font-size:15.5px;color:#262626;transform:scaleX(0.9200)">17</div>
</body></html>
